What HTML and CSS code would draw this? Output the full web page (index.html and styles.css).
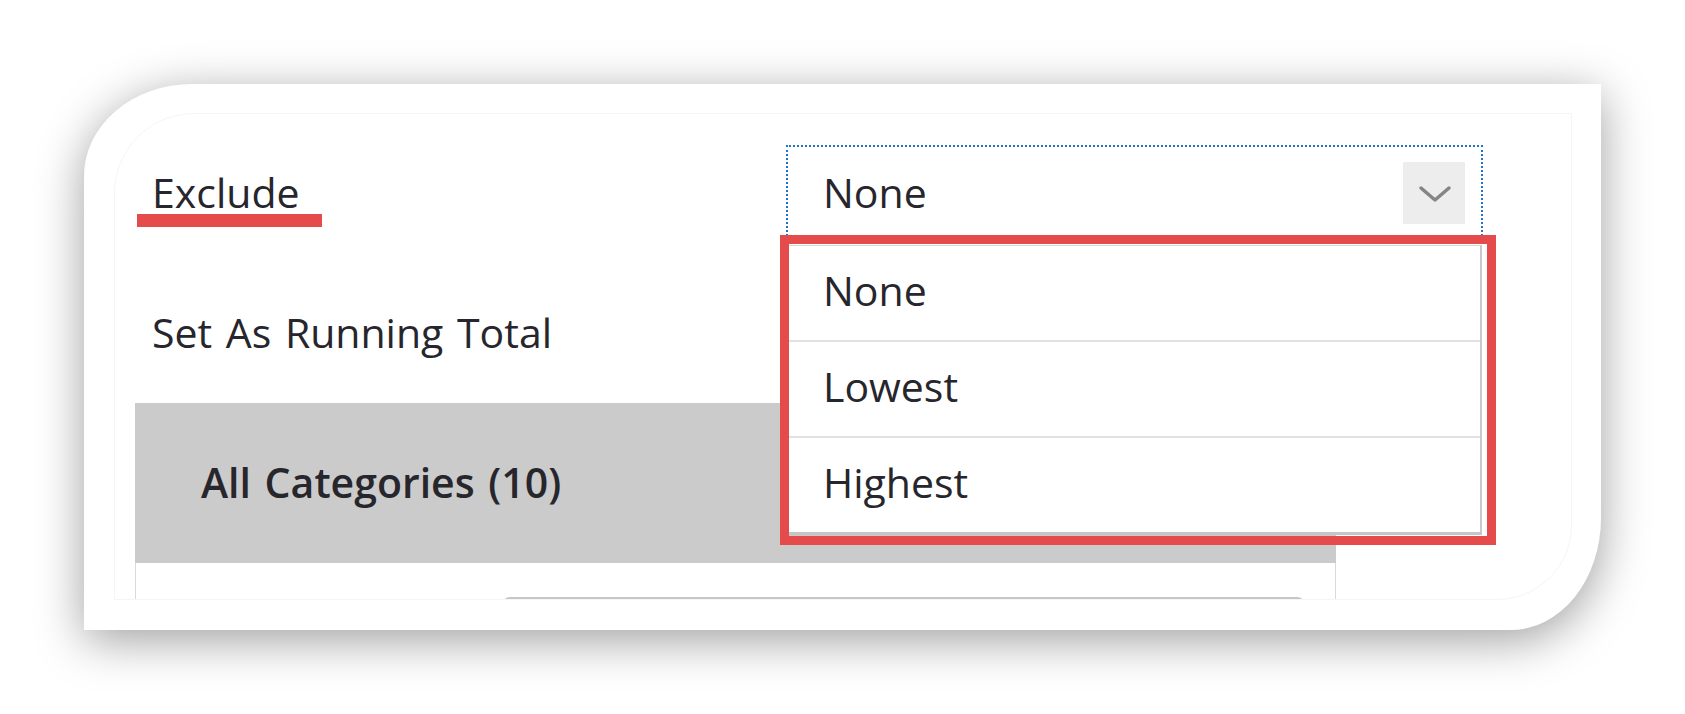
FILE: index.html
```html
<!DOCTYPE html>
<html lang="en">
<head>
<meta charset="utf-8">
<title>Exclude dropdown</title>
<link rel="stylesheet" href="styles.css">
</head>
<body>
<div class="card">
  <div class="frame">
    <div class="row-exclude">
      <div class="label">Exclude<span class="mark-underline"></span></div>
      <div class="select">
        <span class="select-value">None</span>
        <span class="select-arrow">
          <svg width="62" height="62" viewBox="0 0 62 62"><polyline points="18,26 32,38 46,26" fill="none" stroke="#858585" stroke-width="3.5" stroke-linecap="round" stroke-linejoin="round"/></svg>
        </span>
        <ul class="options">
          <li class="option">None</li>
          <li class="option">Lowest</li>
          <li class="option">Highest</li>
        </ul>
        <div class="mark-box"></div>
      </div>
    </div>
    <div class="row-running">Set As Running Total</div>
    <div class="categories">
      <div class="categories-head">All Categories (10)</div>
      <div class="categories-body"><div class="search"></div></div>
    </div>
  </div>
</div>
</body>
</html>
```

FILE: styles.css
```css
html, body {
  margin: 0;
  padding: 0;
  background: #ffffff;
}

body {
  width: 1685px;
  height: 714px;
  overflow: hidden;
  font-family: "Open Sans", "Noto Sans", sans-serif;
  color: #26262c;
}

.card {
  box-sizing: border-box;
  margin: 84px 0 0 84px;
  width: 1517px;
  height: 546px;
  padding: 29px 29px 30px 30px;
  background: #ffffff;
  border-radius: 108px 0 90px 0 / 92px 0 112px 0;
  box-shadow: 0 10px 48px rgba(0, 0, 0, 0.38);
}

.frame {
  box-sizing: border-box;
  width: 1458px;
  height: 487px;
  border: 1px solid #f5f5f5;
  border-radius: 80px 0 75px 0;
  overflow: hidden;
  padding-left: 20px;
  font-size: 41px;
  word-spacing: 3px;
}

.row-exclude {
  display: flex;
  margin-top: 31px;
  height: 95px;
  position: relative;
  z-index: 2;
}

.label {
  position: relative;
  box-sizing: border-box;
  width: 651px;
  padding-left: 17px;
  line-height: 94px;
}

.mark-underline {
  position: absolute;
  left: 2px;
  top: 69px;
  width: 185px;
  height: 13px;
  background: #e54b4b;
}

.select {
  position: relative;
  box-sizing: border-box;
  width: 697px;
  height: 95px;
  border: 2px dotted #1f75c4;
  border-bottom: none;
}

.select-value {
  display: block;
  padding-left: 35px;
  line-height: 90px;
}

.select-arrow {
  position: absolute;
  right: 16px;
  top: 15px;
  width: 62px;
  height: 62px;
  background: #ededed;
}

.select-arrow svg {
  display: block;
}

.options {
  position: absolute;
  left: 0;
  top: 98px;
  width: 694px;
  box-sizing: border-box;
  margin: 0;
  padding: 0;
  list-style: none;
  background: #ffffff;
  border: 1px solid #d6d6d6;
  border-right: 2px solid #c9c9c9;
  border-bottom: 3px solid #c6c6c6;
}

.option {
  height: 94px;
  box-sizing: border-box;
  padding: 0 0 6px 34px;
  line-height: 88px;
}

.option + .option {
  border-top: 2px solid #e2e2e2;
  height: 96px;
}

.mark-box {
  position: absolute;
  left: -8px;
  top: 88px;
  width: 716px;
  height: 310px;
  box-sizing: border-box;
  border: 9px solid #e54b4b;
}

.row-running {
  padding: 65px 0 0 17px;
  line-height: 54px;
  height: 54px;
  margin-bottom: 44px;
}

.categories {
  width: 1201px;
}

.categories-head {
  height: 160px;
  box-sizing: border-box;
  background: #cbcbcb;
  padding: 0 0 2px 66px;
  line-height: 158px;
  font-weight: 600;
}

.categories-body {
  height: 80px;
  border-left: 1px solid #dadada;
  border-right: 1px solid #dadada;
  padding-top: 34px;
  box-sizing: border-box;
}

.search {
  margin-left: 366px;
  width: 803px;
  height: 60px;
  box-sizing: border-box;
  border: 2px solid #c6c6c6;
  border-bottom: none;
  border-radius: 8px 8px 0 0;
}
```
